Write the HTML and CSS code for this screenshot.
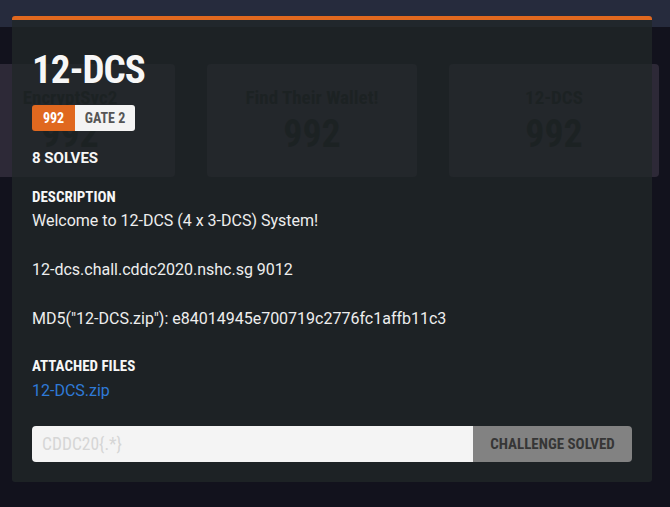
FILE: index.html
```html
<!DOCTYPE html>
<html>
<head>
<meta charset="utf-8">
<link rel="stylesheet" href="styles.css">
</head>
<body>
  <header class="topbar"></header>
  <main class="page">
    <div class="cards">
      <div class="card"><div class="card-title">EncryptSvc2</div><div class="card-pts">992</div></div>
      <div class="card"><div class="card-title">Find Their Wallet!</div><div class="card-pts">992</div></div>
      <div class="card"><div class="card-title">12-DCS</div><div class="card-pts">992</div></div>
    </div>
  </main>
  <div class="modal">
    <h1 class="title">12-DCS</h1>
    <div class="badge"><span class="badge-pts">992</span><span class="badge-cat">GATE 2</span></div>
    <div class="solves">8 SOLVES</div>
    <h2 class="label">DESCRIPTION</h2>
    <div class="desc">
      <p>Welcome to 12-DCS (4 x 3-DCS) System!</p>
      <p>12-dcs.chall.cddc2020.nshc.sg 9012</p>
      <p>MD5("12-DCS.zip"): e84014945e700719c2776fc1affb11c3</p>
    </div>
    <h2 class="label label-files">ATTACHED FILES</h2>
    <a class="file" href="#">12-DCS.zip</a>
    <form class="flag">
      <input class="flag-input" type="text" placeholder="CDDC20{.*}">
      <button class="flag-btn" type="button">CHALLENGE SOLVED</button>
    </form>
  </div>
</body>
</html>
```

FILE: styles.css
```css
* { box-sizing: border-box; }
html, body { margin: 0; padding: 0; }
body {
  width: 670px;
  height: 507px;
  overflow: hidden;
  background: #12121d;
  font-family: Roboto, "Liberation Sans", sans-serif;
  position: relative;
}
.topbar {
  height: 27px;
  background: #262b3d;
}
.page {
  padding-top: 37px;
}
.cards {
  display: flex;
  gap: 32px;
  margin-left: -35px;
}
.card {
  flex: 0 0 210px;
  height: 113px;
  background: #2d2937;
  border-radius: 4px;
  display: flex;
  flex-direction: column;
  align-items: center;
  padding-top: 22px;
  color: #0e0f12;
  font-family: Roboto, sans-serif;
  font-stretch: 80%;
  font-weight: bold;
}
.card-title { font-size: 19px; line-height: 24px; }
.card-pts { font-size: 38px; line-height: 40px; margin-top: 4px; }

.modal {
  position: absolute;
  left: 12px;
  top: 16px;
  width: 640px;
  height: 466px;
  background: rgba(33, 39, 40, 0.8);
  border-top: 4px solid #e0681f;
  border-radius: 3px;
  padding: 28px 20px 0 20px;
  color: #f2f2f2;
}
.title {
  margin: 0;
  font-family: Roboto, sans-serif;
  font-stretch: 75%;
  font-weight: bold;
  font-size: 39px;
  letter-spacing: -1px;
  line-height: 44px;
  color: #f7f7f7;
}
.badge {
  display: inline-flex;
  margin-top: 13px;
  height: 26px;
  border-radius: 3px;
  overflow: hidden;
  font-family: Roboto, sans-serif;
  font-stretch: 75%;
  font-weight: bold;
  font-size: 14px;
}
.badge-pts {
  background: #e0681f;
  color: #fff;
  width: 43px;
  display: flex; align-items: center; justify-content: center;
}
.badge-cat {
  background: #f4f4f4;
  color: #555;
  width: 60px;
  display: flex; align-items: center; justify-content: center;
}
.solves, .label {
  font-family: Roboto, sans-serif;
  font-stretch: 82%;
  font-weight: bold;
  font-size: 15px;
  line-height: 18px;
  color: #f7f7f7;
  margin: 0;
}
.solves { margin-top: 18px; font-stretch: 95%; }
.label { margin-top: 21px; }
.desc {
  font-size: 16px;
  line-height: 24.5px;
  color: #eeeeee;
  margin-top: 3px;
}
.desc p { margin: 0 0 24.5px 0; }
.desc p:last-child { margin-bottom: 0; }
.label-files { margin-top: 25px; }
.file {
  display: block;
  margin-top: 4px;
  font-size: 16px;
  line-height: 24px;
  color: #2f7ad8;
  text-decoration: none;
}
.flag {
  display: flex;
  margin-top: 23px;
  height: 36px;
  border-radius: 4px;
  overflow: hidden;
}
.flag-input {
  flex: 1;
  border: 0;
  outline: 0;
  background: #f4f4f4;
  padding: 0 10px;
  font-family: Roboto, sans-serif;
  font-stretch: 75%;
  font-size: 17.5px;
}
.flag-input::placeholder { color: #d6d6d6; }
.flag-btn {
  width: 159px;
  border: 0;
  background: #828282;
  color: #363636;
  font-family: Roboto, sans-serif;
  font-stretch: 82%;
  font-weight: bold;
  font-size: 15px;
  padding: 0;
}
```
